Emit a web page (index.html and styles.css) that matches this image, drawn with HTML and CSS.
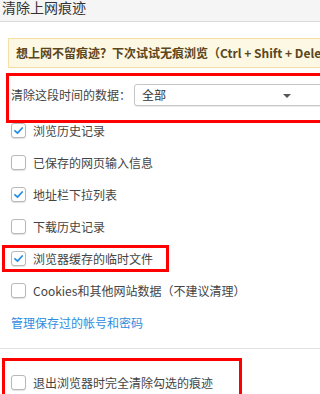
FILE: index.html
```html
<!DOCTYPE html>
<html lang="zh-CN">
<head>
<meta charset="utf-8">
<title>清除上网痕迹</title>
<link rel="stylesheet" href="styles.css">
</head>
<body>
<div class="page">
  <div class="header"><span class="title">清除上网痕迹</span></div>
  <div class="alert">想上网不留痕迹？下次试试无痕浏览（Ctrl + Shift + Delete）</div>
  <div class="range">
    <span class="range-label">清除这段时间的数据：</span>
    <div class="select"><span>全部</span><span class="caret"></span></div>
  </div>
  <ul class="checks">
    <li class="row"><span class="cb"><svg viewBox="0 0 13 13"><path d="M3 6.8 L5.5 9.2 L10.2 4"/></svg></span><span>浏览历史记录</span></li>
    <li class="row"><span class="cb"></span><span>已保存的网页输入信息</span></li>
    <li class="row"><span class="cb"><svg viewBox="0 0 13 13"><path d="M3 6.8 L5.5 9.2 L10.2 4"/></svg></span><span>地址栏下拉列表</span></li>
    <li class="row"><span class="cb"></span><span>下载历史记录</span></li>
    <li class="row"><span class="cb"><svg viewBox="0 0 13 13"><path d="M3 6.8 L5.5 9.2 L10.2 4"/></svg></span><span>浏览器缓存的临时文件</span></li>
    <li class="row"><span class="cb"></span><span>Cookies和其他网站数据（不建议清理）</span></li>
    <li class="row"><a class="link" href="#">管理保存过的帐号和密码</a></li>
  </ul>
  <div class="divider"></div>
  <div class="row exit"><span class="cb"></span><span>退出浏览器时完全清除勾选的痕迹</span></div>
  <div class="mark mark-range"></div>
  <div class="mark mark-cache"></div>
  <div class="mark mark-exit"></div>
</div>
</body>
</html>
```
FILE: styles.css
```css
html, body {
  margin: 0;
  padding: 0;
  background: #ffffff;
  overflow: hidden;
}
.page {
  position: relative;
  height: 394px;
  overflow: hidden;
  font-family: "Noto Sans CJK SC", "Noto Sans", sans-serif;
  font-size: 12px;
  color: #4a4a4a;
}
.header {
  height: 21px;
  background: #f5f5f5;
  border-bottom: 1px solid #dadada;
  padding-left: 2px;
}
.title {
  display: block;
  font-size: 14px;
  line-height: 14px;
  color: #333;
}
.alert {
  margin: 16px -40px 0 8px;
  height: 28px;
  line-height: 28px;
  padding-left: 7px;
  background: #fcf8e3;
  border: 1px solid #f4dfa6;
  font-weight: bold;
  color: #5b4620;
  white-space: nowrap;
  overflow: hidden;
}
.range {
  display: flex;
  align-items: center;
  height: 39px;
  margin: 7px -30px 0 0;
  padding-left: 11px;
}
.range-label {
  width: 123px;
  color: #444;
}
.select {
  position: relative;
  flex: 1;
  height: 20px;
  border: 1px solid #c6c6c6;
  border-radius: 3px;
  box-shadow: 0 1px 1px rgba(0,0,0,0.08);
  background: #fff;
  display: flex;
  align-items: center;
  padding-left: 7px;
  color: #333;
}
.caret {
  position: absolute;
  left: 148px;
  top: 9px;
  width: 0;
  height: 0;
  border-left: 4px solid transparent;
  border-right: 4px solid transparent;
  border-top: 4px solid #555;
}
.checks {
  list-style: none;
  margin: 0;
  padding: 0;
}
.row {
  display: flex;
  align-items: center;
  height: 32px;
  padding-left: 11px;
  color: #444;
}
.cb {
  width: 13px;
  height: 13px;
  border: 1px solid #b8b8b8;
  border-radius: 3px;
  background: #fff;
  box-shadow: 0 1px 1px rgba(0,0,0,0.12);
  margin-right: 7px;
  flex: none;
  display: flex;
}
.cb svg {
  width: 13px;
  height: 13px;
}
.cb path {
  fill: none;
  stroke: #2a8fe8;
  stroke-width: 1.8;
  stroke-linecap: round;
  stroke-linejoin: round;
}
.link {
  color: #2e8ddf;
  text-decoration: none;
}
.divider {
  margin-top: 10px;
  height: 1px;
  background: #e2e2e2;
}
.exit {
  margin-top: 17px;
}
.mark {
  position: absolute;
  border: 3px solid #ff0000;
  box-sizing: border-box;
}
.mark-range {
  left: 6px;
  right: -20px;
  top: 73px;
  height: 50px;
}
.mark-cache {
  left: 2px;
  top: 245px;
  width: 167px;
  height: 27px;
}
.mark-exit {
  left: 2px;
  top: 358px;
  width: 240px;
  height: 50px;
}
```
